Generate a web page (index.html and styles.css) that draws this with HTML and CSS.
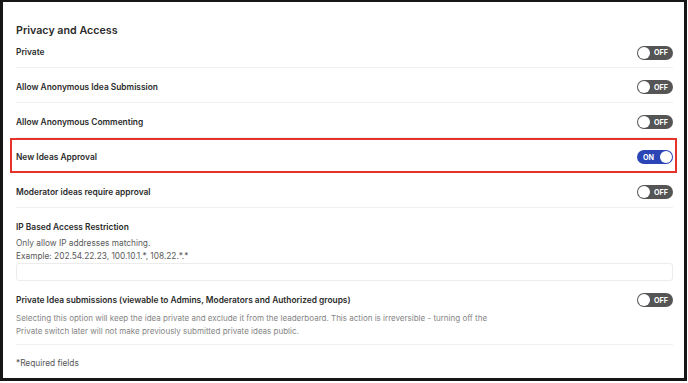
FILE: index.html
```html
<!DOCTYPE html>
<html lang="en">
<head>
  <meta charset="UTF-8">
  <meta name="viewport" content="width=device-width, initial-scale=1.0">
  <title>Privacy and Access</title>
  <link rel="stylesheet" href="styles.css">
</head>
<body>
  <div class="frame">
    <section class="settings">
      <h2 class="settings-title">Privacy and Access</h2>

      <div class="row first">
        <span class="label">Private</span>
        <span class="toggle"><span class="knob"></span><span class="state">OFF</span></span>
      </div>

      <div class="row">
        <span class="label">Allow Anonymous Idea Submission</span>
        <span class="toggle"><span class="knob"></span><span class="state">OFF</span></span>
      </div>

      <div class="row">
        <span class="label">Allow Anonymous Commenting</span>
        <span class="toggle"><span class="knob"></span><span class="state">OFF</span></span>
      </div>

      <div class="row highlighted">
        <span class="label">New Ideas Approval</span>
        <span class="toggle on"><span class="state">ON</span><span class="knob"></span></span>
      </div>

      <div class="row">
        <span class="label">Moderator ideas require approval</span>
        <span class="toggle"><span class="knob"></span><span class="state">OFF</span></span>
      </div>

      <div class="block">
        <span class="label">IP Based Access Restriction</span>
        <p class="hint">Only allow IP addresses matching.<br>Example: 202.54.22.23, 100.10.1.*, 108.22.*.*</p>
        <input type="text" class="ip-input">
      </div>

      <div class="row tall">
        <div class="text">
          <span class="label">Private Idea submissions (viewable to Admins, Moderators and Authorized groups)</span>
          <p class="note">Selecting this option will keep the idea private and exclude it from the leaderboard. This action is irreversible - turning off the<br>Private switch later will not make previously submitted private ideas public.</p>
        </div>
        <span class="toggle"><span class="knob"></span><span class="state">OFF</span></span>
      </div>

      <p class="required">*Required fields</p>
    </section>
  </div>
</body>
</html>
```

FILE: styles.css
```css
/* Reset */
* {
    margin: 0;
    padding: 0;
    box-sizing: border-box;
}

body {
    font-family: 'Inter', 'Noto Sans', sans-serif;
    background: #fff;
    color: #2b2b2b;
}

/* Screenshot frame */
.frame {
    width: 687px;
    height: 381px;
    border: 3px solid #161616;
    border-top-width: 2px;
    background: #fff;
    overflow: hidden;
}

.settings {
    padding: 21px 11px 0 13px;
}

.settings-title {
    font-size: 10.7px;
    font-weight: 600;
    line-height: 16px;
    color: #2b2b2b;
}

/* Setting rows */
.row {
    position: relative;
    display: flex;
    align-items: center;
    justify-content: space-between;
    height: 35px;
    padding: 4px 0 0;
    border-bottom: 1px solid #efefef;
}

.row.first {
    height: 29px;
    padding: 0 0 1px;
}

.row.highlighted::after {
    content: "";
    position: absolute;
    left: -6px;
    right: -4px;
    top: 0;
    bottom: -1px;
    border: 2px solid #e5322b;
}

.label {
    display: block;
    font-size: 8.4px;
    font-weight: 600;
    line-height: 13px;
    color: #2b2b2b;
}

/* Toggle switch */
.toggle {
    display: flex;
    flex-shrink: 0;
    align-items: center;
    justify-content: space-between;
    width: 36px;
    height: 14px;
    padding: 0 1px;
    border-radius: 7px;
    background: #555;
}

.toggle .knob {
    width: 12px;
    height: 12px;
    border-radius: 50%;
    background: #fff;
}

.toggle .state {
    font-size: 7.2px;
    font-weight: 700;
    color: #fff;
    padding-right: 4px;
}

.toggle.on {
    background: #2b45b6;
}

.toggle.on .state {
    padding: 0 0 0 5px;
}

/* IP block */
.block {
    padding: 13px 0 0;
}

.hint {
    margin-top: 3px;
    font-size: 8.3px;
    line-height: 13px;
    color: #5a5a5a;
}

.ip-input {
    display: block;
    width: 100%;
    height: 18px;
    border: 1px solid #ececec;
    border-radius: 3px;
    outline: none;
}

.row.tall {
    height: auto;
    align-items: flex-start;
    padding: 13px 0 6px;
}

.row.tall .toggle {
    margin-top: -1px;
}

.note {
    margin-top: 5px;
    font-size: 8px;
    line-height: 13px;
    color: #858585;
}

.required {
    padding-top: 12px;
    font-size: 8.3px;
    line-height: 13px;
    color: #555;
}
```
